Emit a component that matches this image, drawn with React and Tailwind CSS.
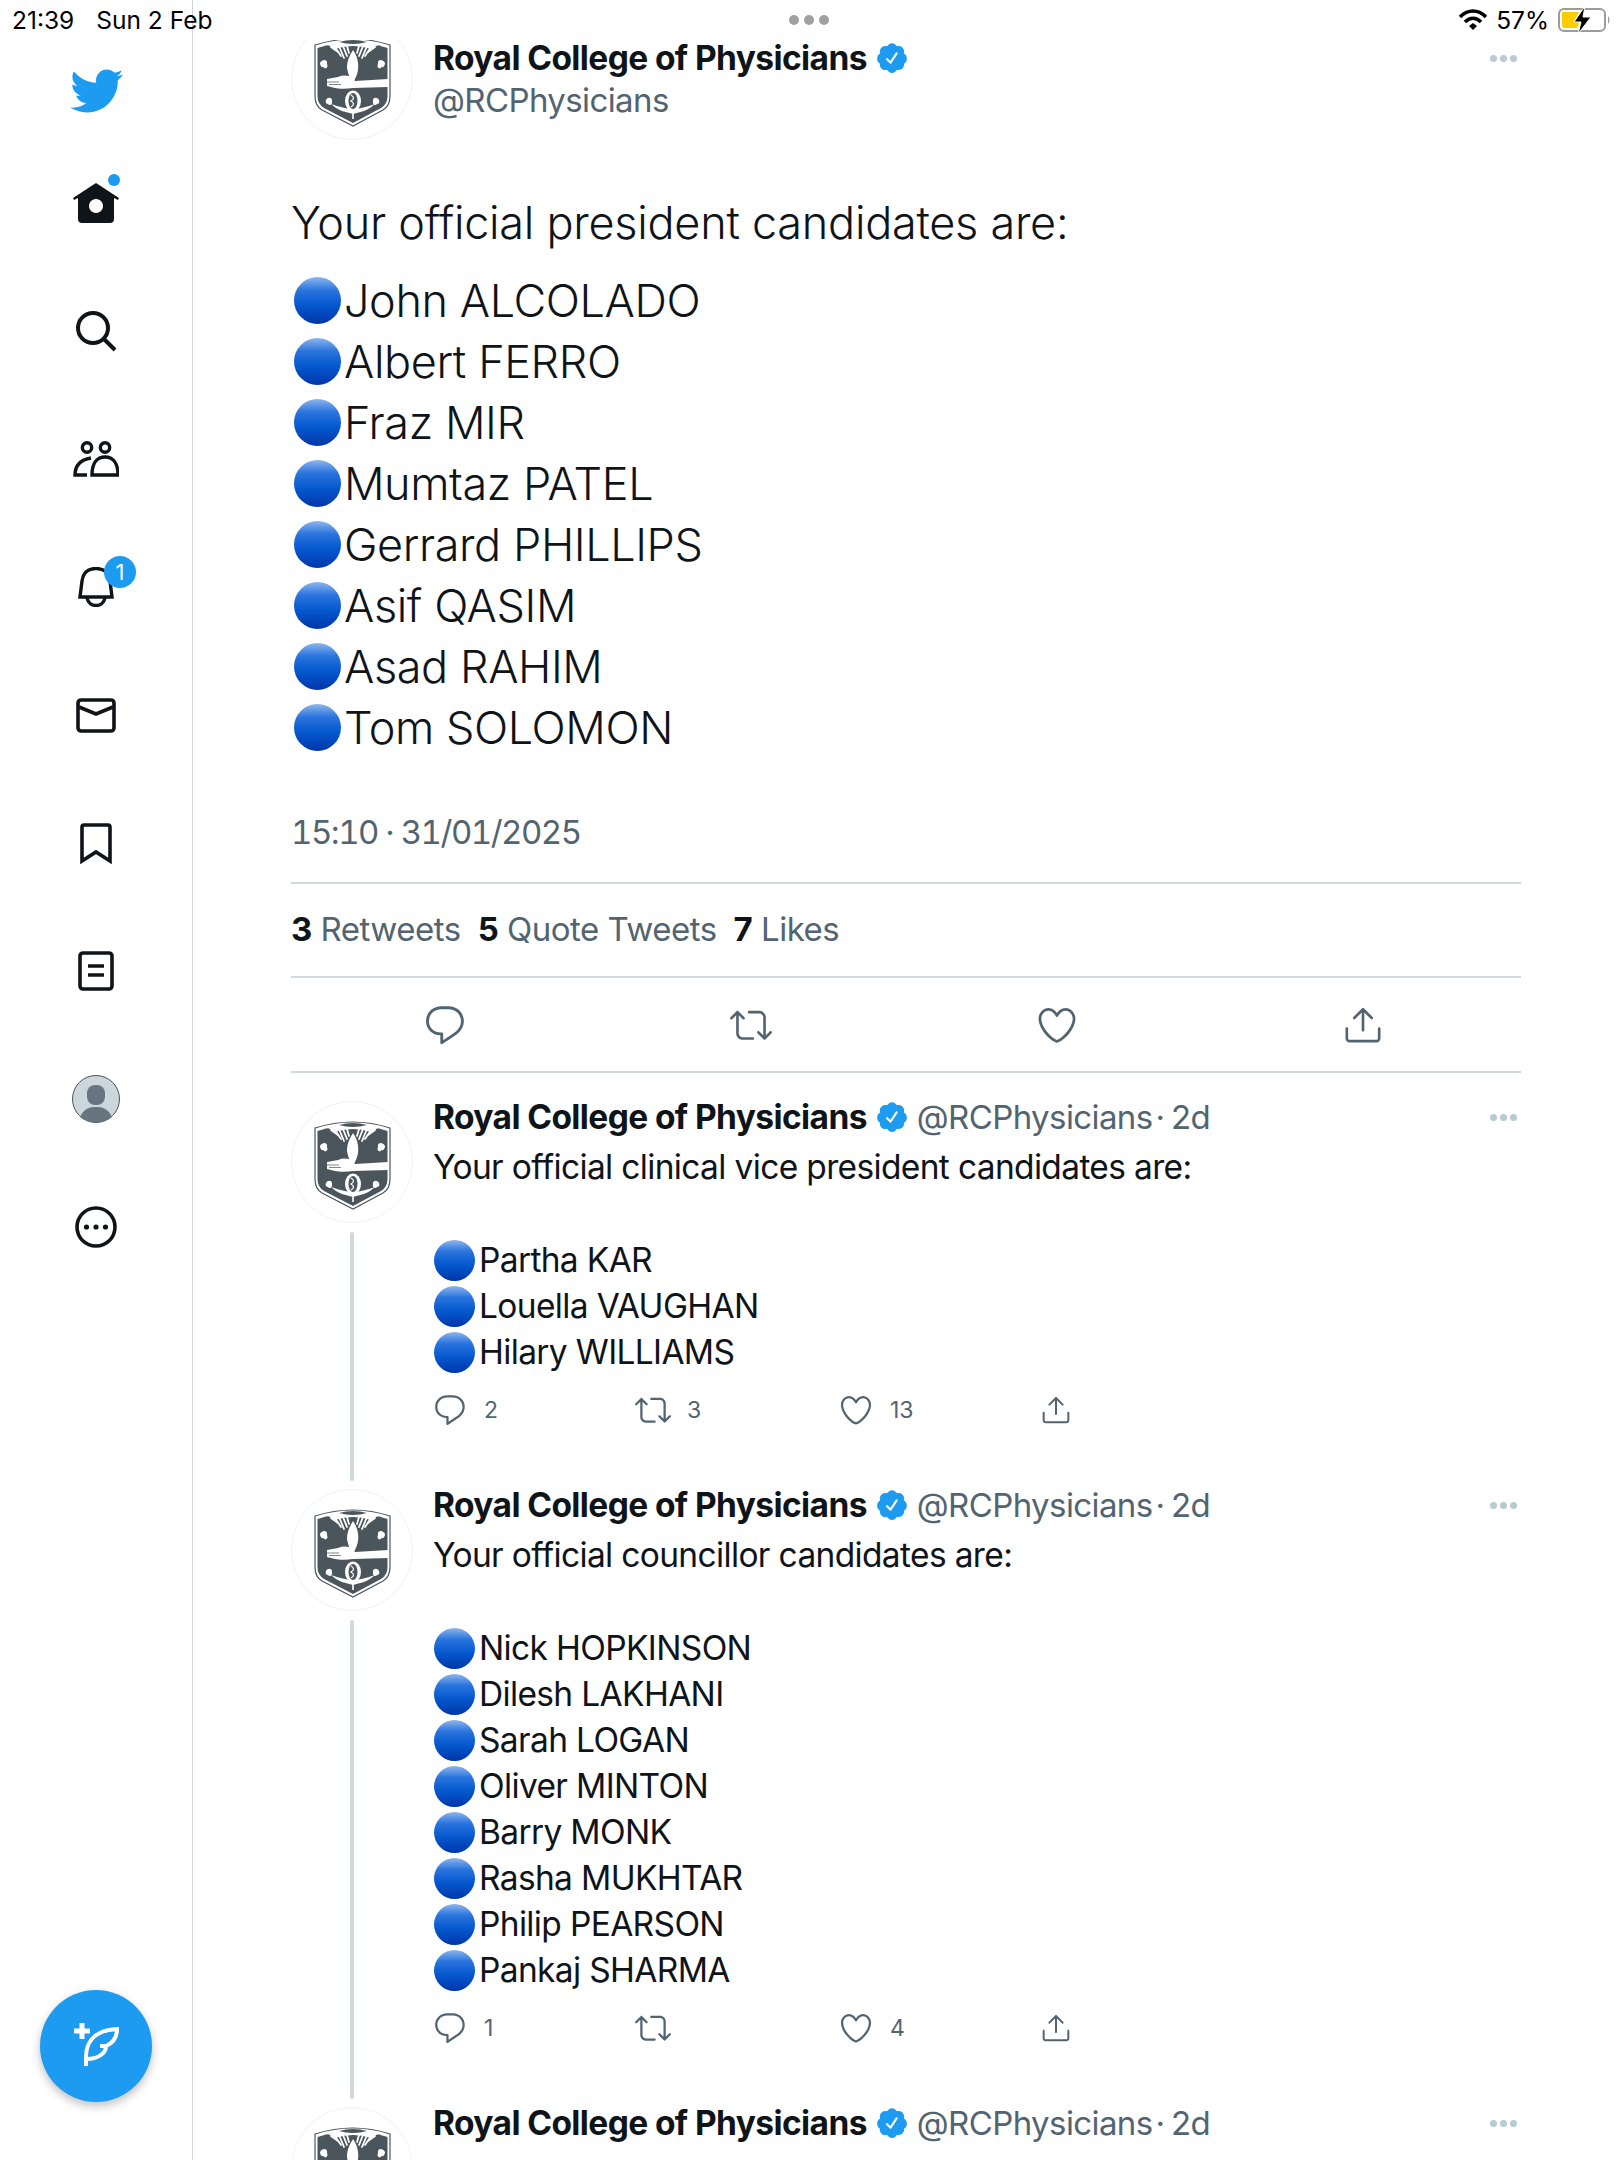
import React from "react";

const font = { fontFamily: "Inter, 'Liberation Sans', sans-serif" };

/* Twitter glyphs */
const BIRD =
  "M23.643 4.937c-.835.37-1.732.62-2.675.733.962-.576 1.7-1.49 2.048-2.578-.9.534-1.897.922-2.958 1.13-.85-.904-2.06-1.47-3.4-1.47-2.572 0-4.658 2.086-4.658 4.66 0 .364.042.718.12 1.06-3.873-.195-7.304-2.05-9.602-4.868-.4.69-.63 1.49-.63 2.342 0 1.616.823 3.043 2.072 3.878-.764-.025-1.482-.234-2.11-.583v.06c0 2.257 1.605 4.14 3.737 4.568-.392.106-.803.162-1.227.162-.3 0-.593-.028-.877-.082.593 1.85 2.313 3.198 4.352 3.234-1.595 1.25-3.604 1.995-5.786 1.995-.376 0-.747-.022-1.112-.065 2.062 1.323 4.51 2.093 7.14 2.093 8.57 0 13.255-7.098 13.255-13.254 0-.2-.005-.402-.014-.602.91-.658 1.7-1.477 2.323-2.41z";
const REPLY =
  "M14.046 2.242l-4.148-.01h-.002c-4.374 0-7.8 3.427-7.8 7.802 0 4.098 3.186 7.206 7.465 7.37v3.828c0 .108.044.286.12.403.142.225.384.347.632.347.138 0 .277-.038.402-.118.264-.168 6.473-4.14 8.088-5.506 1.902-1.61 3.04-3.97 3.043-6.312v-.017c-.006-4.367-3.43-7.787-7.8-7.788zm3.787 12.972c-1.134.96-4.862 3.405-6.772 4.643V16.67c0-.414-.335-.75-.75-.75h-.396c-3.66 0-6.318-2.476-6.318-5.886 0-3.534 2.768-6.302 6.3-6.302l4.147.01h.002c3.532 0 6.3 2.766 6.302 6.296-.003 1.91-.942 3.844-2.514 5.176z";
const RETWEET =
  "M23.77 15.67c-.292-.293-.767-.293-1.06 0l-2.22 2.22V7.65c0-2.068-1.683-3.75-3.75-3.75h-5.85c-.414 0-.75.336-.75.75s.336.75.75.75h5.85c1.24 0 2.25 1.01 2.25 2.25v10.24l-2.22-2.22c-.293-.293-.768-.293-1.06 0s-.294.768 0 1.06l3.5 3.5c.145.147.337.22.53.22s.383-.072.53-.22l3.5-3.5c.294-.292.294-.767 0-1.06zm-10.66 3.28H7.26c-1.24 0-2.25-1.01-2.25-2.25V6.46l2.22 2.22c.148.147.34.22.532.22s.384-.073.53-.22c.293-.293.293-.768 0-1.06l-3.5-3.5c-.293-.294-.768-.294-1.06 0l-3.5 3.5c-.294.292-.294.767 0 1.06s.767.293 1.06 0l2.22-2.22V16.7c0 2.068 1.683 3.75 3.75 3.75h5.85c.414 0 .75-.336.75-.75s-.337-.75-.75-.75z";
const HEART =
  "M12 21.638h-.014C9.403 21.59 1.95 14.856 1.95 8.478c0-3.064 2.525-5.754 5.403-5.754 2.29 0 3.83 1.58 4.646 2.73.814-1.148 2.354-2.73 4.645-2.73 2.88 0 5.404 2.69 5.404 5.755 0 6.376-7.454 13.11-10.037 13.157H12zM7.354 4.225c-2.08 0-3.903 1.988-3.903 4.255 0 5.74 7.034 11.596 8.55 11.658 1.518-.062 8.55-5.917 8.55-11.658 0-2.267-1.823-4.255-3.903-4.255-2.528 0-3.94 2.936-3.952 2.965-.23.562-1.156.562-1.387 0-.014-.03-1.425-2.965-3.954-2.965z";
const SHARE =
  "M17.53 7.47l-5-5c-.293-.293-.768-.293-1.06 0l-5 5c-.294.293-.294.768 0 1.06s.767.294 1.06 0l3.72-3.72V15c0 .414.336.75.75.75s.75-.336.75-.75V4.81l3.72 3.72c.146.147.338.22.53.22s.384-.072.53-.22c.293-.293.293-.767 0-1.06zM19.708 21.944H4.292C3.028 21.944 2 20.916 2 19.652V14c0-.414.336-.75.75-.75s.75.336.75.75v5.652c0 .437.355.792.792.792h15.416c.437 0 .792-.355.792-.792V14c0-.414.336-.75.75-.75s.75.336.75.75v5.652c0 1.264-1.028 2.292-2.292 2.292z";
const VERIFIED =
  "M22.5 12.5c0-1.58-.875-2.95-2.148-3.6.154-.435.238-.905.238-1.4 0-2.21-1.71-3.998-3.818-3.998-.47 0-.92.084-1.336.25C14.818 2.415 13.51 1.5 12 1.5s-2.816.917-3.437 2.25c-.415-.165-.866-.25-1.336-.25-2.11 0-3.818 1.79-3.818 4 0 .494.083.964.237 1.4-1.272.65-2.147 2.018-2.147 3.6 0 1.495.782 2.798 1.942 3.486-.02.17-.032.34-.032.514 0 2.21 1.708 4 3.818 4 .47 0 .92-.086 1.335-.25.62 1.334 1.926 2.25 3.437 2.25 1.512 0 2.818-.916 3.437-2.25.415.163.865.248 1.336.248 2.11 0 3.818-1.79 3.818-4 0-.174-.012-.344-.033-.513 1.158-.687 1.943-1.99 1.943-3.484zm-6.616-3.334l-4.334 6.5c-.145.217-.382.334-.625.334-.143 0-.288-.04-.416-.126l-.115-.094-2.415-2.415c-.293-.293-.293-.768 0-1.06s.768-.294 1.06 0l1.77 1.767 3.825-5.74c.23-.345.696-.436 1.04-.207.346.23.44.696.21 1.04z";

function Glyph({ d, className }) {
  return (
    <svg viewBox="0 0 24 24" fill="currentColor" className={className}>
      <path d={d} />
    </svg>
  );
}

/* Crest of the college */
function Crest() {
  return (
    <div className="w-[122px] h-[122px] shrink-0 rounded-full border border-[#eff3f4] bg-white overflow-hidden">
      <svg viewBox="1 1 120 120" className="w-full h-full">
        <path d="M24 27 Q62 15 99 27 V78 Q99 88 92 92 L62 108 L31 92 Q24 88 24 78 Z" fill="#fff" stroke="#4b555c" strokeWidth="1.2" />
        <path d="M26.5 30 Q62 19 96.5 30 V78 Q96.5 86 90 90 L62 105 L33 90 Q26.5 86 26.5 78 Z" fill="#4b555c" />
        {/* sun and rays */}
        <path d="M37 27 Q62 20 87 27 L80 31 Q62 25 44 31 Z" fill="#fff" />
        <path d="M48 24 Q62 20 76 24 Q62 28 48 24 Z" fill="#4b555c" />
        <g stroke="#fff" strokeWidth="1.8" strokeLinecap="round">
          <path d="M40 29 L47 34" />
          <path d="M44 29 L50 38" />
          <path d="M48 28 L53 40" />
          <path d="M52 28 L56 38" />
          <path d="M56 28 L58 35" />
          <path d="M68 28 L66 35" />
          <path d="M72 28 L68 38" />
          <path d="M76 28 L71 40" />
          <path d="M80 29 L74 38" />
          <path d="M84 29 L77 34" />
        </g>
        {/* bird */}
        <path d="M62 32 C66 38 68 44 67 52 C66 58 64 60 63 64 H60 C59 60 57 56 56 50 C56 42 59 37 62 32 Z" fill="#fff" />
        {/* arm and hand */}
        <path d="M36 61 L47 59 C52 57 57 57 61 60 L64 63 L97 61 V69 L62 70 C56 71 48 71 44 70 L36 68 Z" fill="#fff" />
        <path d="M36 64 H48 M38 66.5 H50" stroke="#4b555c" strokeWidth="0.7" />
        {/* pomegranate */}
        <ellipse cx="62" cy="83" rx="8" ry="10.5" fill="#fff" />
        <ellipse cx="62" cy="83" rx="4.5" ry="8" fill="#4b555c" />
        <path d="M60 77 Q65 80 60 83 Q65 86 60 89" fill="none" stroke="#fff" strokeWidth="1.2" />
        <path d="M40 86 C47 93 55 94 62 96 C69 94 77 93 84 86 C76 89 68 90 62 92 C56 90 48 89 40 86 Z" fill="#fff" />
        <path d="M62 95 V101" stroke="#fff" strokeWidth="1.6" />
        {/* scrolls */}
        <path d="M29 45 C32 40 37 42 36 46 C38 50 33 52 33 49 C31 50 29 48 29 45 Z" fill="#fff" />
        <path d="M94 45 C91 40 86 42 87 46 C85 50 90 52 90 49 C92 50 94 48 94 45 Z" fill="#fff" />
        <path d="M35 82 C37 78 42 80 41 83 C42 87 38 88 37 86 C35 86 34 84 35 82 Z" fill="#fff" />
        <path d="M88 82 C86 78 81 80 82 83 C81 87 85 88 86 86 C88 86 89 84 88 82 Z" fill="#fff" />
      </svg>
    </div>
  );
}

function Dots() {
  return (
    <div className="flex gap-[3px] ml-auto mr-[4px]">
      <span className="w-[7px] h-[7px] rounded-full bg-[#b9cad3]"></span>
      <span className="w-[7px] h-[7px] rounded-full bg-[#b9cad3]"></span>
      <span className="w-[7px] h-[7px] rounded-full bg-[#b9cad3]"></span>
    </div>
  );
}

function BlueDot({ size }) {
  return (
    <span
      className={
        "inline-block shrink-0 rounded-full bg-[linear-gradient(180deg,#8db6ee_0%,#2a74de_28%,#0558cf_60%,#0036a8_100%)] " +
        size
      }
    ></span>
  );
}

function Name() {
  return (
    <>
      <span className="font-bold text-[33.5px] leading-[30px] text-[#0f1419] tracking-[-0.6px]">
        Royal College of Physicians
      </span>
      <Glyph d={VERIFIED} className="w-[34px] h-[34px] text-[#1d9bf0] ml-[8px] shrink-0" />
    </>
  );
}

function Action({ d, count }) {
  return (
    <div className="w-[203px] flex items-center gap-[16px] text-[#536471]">
      <Glyph d={d} className="w-[36px] h-[36px]" />
      {count && <span className="text-[23px]">{count}</span>}
    </div>
  );
}

function Reply({ intro, names, counts }) {
  return (
    <div className="flex">
      <div className="flex flex-col items-center w-[122px] shrink-0 pb-[8px]">
        <Crest />
        <div className="w-[4px] flex-1 mt-[9px] rounded-full bg-[#cfd9de]"></div>
      </div>
      <div className="ml-[20px] flex-1 pb-[56px]">
        <div className="flex items-center h-[30px] mt-[1px]">
          <Name />
          <span className="ml-[8px] text-[33px] leading-[30px] text-[#536471] tracking-[-0.6px]">@RCPhysicians</span>
          <span className="ml-[3px] text-[33px] leading-[30px] text-[#536471]">·</span>
          <span className="ml-[6px] text-[33px] leading-[30px] text-[#536471] tracking-[-0.6px]">2d</span>
          <Dots />
        </div>
        <p className="mt-[12px] text-[33.5px] leading-[46px] text-[#0f1419] tracking-[-0.65px]">{intro}</p>
        <div className="mt-[47px] text-[33.5px] leading-[46px] text-[#0f1419] tracking-[-0.65px]">
          {names.map((n) => (
            <div key={n} className="flex items-center">
              <BlueDot size="w-[41px] h-[41px] ml-[1px] mr-[4px]" />
              {n}
            </div>
          ))}
        </div>
        <div className="flex items-center h-[46px] mt-[12px] -ml-[1px]">
          <Action d={REPLY} count={counts[0]} />
          <Action d={RETWEET} count={counts[1]} />
          <Action d={HEART} count={counts[2]} />
          <Glyph d={SHARE} className="w-[32px] h-[32px] text-[#536471] -ml-[1px]" />
        </div>
      </div>
    </div>
  );
}

function StatusBar() {
  return (
    <div className="absolute top-0 left-0 w-full h-[40px] flex items-center pl-[12px] pr-[8px] text-[24.5px] text-black z-20">
      <span>21:39</span>
      <span className="ml-[22px]">Sun 2 Feb</span>
      <div className="absolute left-[789px] top-[15px] flex gap-[5px]">
        <span className="w-[10px] h-[10px] rounded-full bg-[#a0a0a0]"></span>
        <span className="w-[10px] h-[10px] rounded-full bg-[#a0a0a0]"></span>
        <span className="w-[10px] h-[10px] rounded-full bg-[#a0a0a0]"></span>
      </div>
      <div className="ml-auto flex items-center">
        <svg viewBox="0 0 28 22" className="w-[28px] h-[22px]">
          <path d="M1 8 C9 0 19 0 27 8" fill="none" stroke="#000" strokeWidth="3.6" />
          <path d="M6 13 C11 8 17 8 22 13" fill="none" stroke="#000" strokeWidth="3.6" />
          <path d="M10 17 L14 14 L18 17 L14 21 Z" fill="#000" />
        </svg>
        <span className="ml-[9px]">57%</span>
        <svg viewBox="0 0 54 28" className="w-[54px] h-[28px] ml-[9px]">
          <rect x="1" y="3" width="46" height="22" rx="5" fill="none" stroke="#9b9b9b" strokeWidth="2" />
          <path d="M4 6 H21 L16 15 H22 L19 22 H7 Q4 22 4 19 Z" fill="#ffcc00" />
          <path d="M27 0 L16 16 H23 L20 28 L33 11 H25 Z" fill="#000" stroke="#fff" strokeWidth="1" />
          <path d="M50 10 Q53 14 50 18 Z" fill="#9b9b9b" />
        </svg>
      </div>
    </div>
  );
}

function NavItem({ children }) {
  return <div className="h-[128px] w-full flex items-center justify-center shrink-0">{children}</div>;
}

function Sidebar() {
  return (
    <aside className="w-[193px] h-full shrink-0 border-r border-[#cfd9de] flex flex-col items-center pt-[58px]">
      <div className="h-[65px] mb-[16px] flex items-center justify-center shrink-0">
        <Glyph d={BIRD} className="w-[56px] h-[56px] text-[#1d9bf0]" />
      </div>
      <NavItem>
        <div className="relative">
          <svg viewBox="0 0 46 40" className="w-[46px] h-[40px] text-[#0f1419]">
            <path fillRule="evenodd" fill="currentColor" d="M23 0 L46 15 L45 17 L41 15 V36 a4 4 0 0 1-4 4 H9 a4 4 0 0 1-4-4 V15 L1 17 L0 15 Z M23 16 a7 7 0 1 0 0.01 0 Z" />
          </svg>
          <span className="absolute -top-[9px] right-[-1px] w-[12px] h-[12px] rounded-full bg-[#1d9bf0]"></span>
        </div>
      </NavItem>
      <NavItem>
        <svg viewBox="0 0 44 44" fill="none" stroke="#0f1419" strokeWidth="4" className="w-[44px] h-[44px]">
          <circle cx="19" cy="19" r="15" />
          <path d="M30 30 L41 41" />
        </svg>
      </NavItem>
      <NavItem>
        <svg viewBox="0 0 46 36" fill="none" stroke="#0f1419" strokeWidth="3.4" className="w-[46px] h-[36px]">
          <circle cx="14" cy="6.5" r="4.7" />
          <circle cx="32" cy="6.5" r="4.7" />
          <path d="M19 34 C19 22 24 16 32 16 C40 16 45 22 45 34 Z" />
          <path d="M14 34 H2 C2 25 6 19 18 17" />
        </svg>
      </NavItem>
      <NavItem>
        <div className="relative">
          <svg viewBox="0 0 36 40" fill="none" stroke="#0f1419" strokeWidth="3.4" className="w-[36px] h-[40px]">
            <path d="M2 30 L4 14 C5 6 10 1.5 18 1.5 C26 1.5 31 6 32 14 L34 30 Z" />
            <path d="M9 31 C10 36 14 38.5 18 38.5 C22 38.5 26 36 27 31" />
          </svg>
          <span className="absolute -top-[11px] -right-[22px] w-[32px] h-[32px] rounded-full bg-[#1d9bf0] text-white text-[22px] flex items-center justify-center">
            1
          </span>
        </div>
      </NavItem>
      <NavItem>
        <svg viewBox="0 0 40 35" fill="none" stroke="#0f1419" strokeWidth="3.6" className="w-[40px] h-[35px]">
          <rect x="2" y="2" width="36" height="31" rx="3" />
          <path d="M3 9 L20 16 L37 9" />
        </svg>
      </NavItem>
      <NavItem>
        <svg viewBox="0 0 32 41" fill="none" stroke="#0f1419" strokeWidth="3.6" className="w-[32px] h-[41px]">
          <path d="M2 38 V4 a2 2 0 0 1 2-2 H28 a2 2 0 0 1 2 2 V38 L16 29 Z" />
        </svg>
      </NavItem>
      <NavItem>
        <svg viewBox="0 0 36 40" fill="none" stroke="#0f1419" strokeWidth="3.6" className="w-[36px] h-[40px]">
          <rect x="2" y="2" width="32" height="36" rx="3" />
          <path d="M10 15 H26 M10 24 H26" />
        </svg>
      </NavItem>
      <NavItem>
        <svg viewBox="0 0 48 48" className="w-[48px] h-[48px]">
          <circle cx="24" cy="24" r="23.5" fill="#ccd6dd" stroke="#4b555c" />
          <rect x="15" y="10" width="18" height="20" rx="8" fill="#66757f" />
          <path d="M8 42 C12 33 18 32 24 32 C30 32 36 33 40 42 C32 49 16 49 8 42 Z" fill="#66757f" />
        </svg>
      </NavItem>
      <NavItem>
        <svg viewBox="0 0 42 42" className="w-[42px] h-[42px]">
          <circle cx="21" cy="21" r="19" fill="none" stroke="#0f1419" strokeWidth="3.6" />
          <circle cx="11.5" cy="21" r="2.6" fill="#0f1419" />
          <circle cx="21" cy="21" r="2.6" fill="#0f1419" />
          <circle cx="30.5" cy="21" r="2.6" fill="#0f1419" />
        </svg>
      </NavItem>
    </aside>
  );
}

export default function App() {
  const president = ["John ALCOLADO", "Albert FERRO", "Fraz MIR", "Mumtaz PATEL", "Gerrard PHILLIPS", "Asif QASIM", "Asad RAHIM", "Tom SOLOMON"];
  const vice = ["Partha KAR", "Louella VAUGHAN", "Hilary WILLIAMS"];
  const councillors = ["Nick HOPKINSON", "Dilesh LAKHANI", "Sarah LOGAN", "Oliver MINTON", "Barry MONK", "Rasha MUKHTAR", "Philip PEARSON", "Pankaj SHARMA"];

  return (
    <div style={font} className="relative w-[1620px] h-[2160px] bg-white overflow-hidden flex">
      <StatusBar />
      <Sidebar />

      <main className="relative flex-1 h-full overflow-hidden pl-[98px] pr-[99px] pt-[18px]">
        <div className="absolute top-0 left-0 w-full h-[40px] bg-white z-10"></div>

        {/* Main tweet */}
        <div className="flex">
          <Crest />
          <div className="ml-[20px] flex-1 pt-[25px]">
            <div className="flex items-center h-[30px]">
              <Name />
              <Dots />
            </div>
            <div className="mt-[4px] text-[33px] leading-[46px] text-[#536471] tracking-[-0.6px]">@RCPhysicians</div>
          </div>
        </div>

        <p className="mt-[52px] font-light text-[45px] leading-[61px] text-[#0f1419] tracking-[-0.25px]">
          Your official president candidates are:
        </p>
        <div className="mt-[17px] font-light text-[45px] leading-[61px] text-[#0f1419] tracking-[-0.4px]">
          {president.map((n) => (
            <div key={n} className="flex items-center">
              <BlueDot size="w-[47px] h-[47px] ml-[3px] mr-[3px]" />
              {n}
            </div>
          ))}
        </div>

        <div className="mt-[52px] h-[46px] flex items-center text-[33px] tabular-nums text-[#536471] tracking-[-1.5px]">
          15:10 · 31/01/2025
        </div>

        <div className="mt-[26px] h-[94px] border-t-2 border-[#cfd9de] flex items-center gap-[17px] text-[33px] text-[#536471] tracking-[-0.5px]">
          <span><b className="text-[#0f1419]">3</b> Retweets</span>
          <span><b className="text-[#0f1419]">5</b> Quote Tweets</span>
          <span><b className="text-[#0f1419]">7</b> Likes</span>
        </div>

        <div className="h-[97px] pl-[1px] border-y-2 border-[#cfd9de] grid grid-cols-[repeat(4,306px)] items-center justify-items-center text-[#536471]">
          <Glyph d={REPLY} className="w-[46px] h-[46px]" />
          <Glyph d={RETWEET} className="w-[42px] h-[42px]" />
          <Glyph d={HEART} className="w-[44px] h-[44px]" />
          <Glyph d={SHARE} className="w-[42px] h-[42px]" />
        </div>

        {/* Thread */}
        <div className="mt-[28px]">
          <Reply intro="Your official clinical vice president candidates are:" names={vice} counts={["2", "3", "13"]} />
          <Reply intro="Your official councillor candidates are:" names={councillors} counts={["1", null, "4"]} />
          <Reply intro="" names={[]} counts={[]} />
        </div>
      </main>

      {/* Compose button */}
      <button className="absolute left-[40px] top-[1990px] w-[112px] h-[112px] rounded-full bg-[#1d9bf0] shadow-[0_4px_10px_rgba(0,0,0,0.25)] z-20">
        <svg viewBox="0 0 112 112" fill="none" stroke="#fff" className="w-full h-full">
          <path d="M42 33 V49 M34 41 H50" strokeWidth="5" />
          <path d="M46 76 V67 C46 49 58 40 77 39 C77 48 73 53 66 56 H60 H66 C66 62 60 69 46 69" strokeWidth="4" />
        </svg>
      </button>
    </div>
  );
}
